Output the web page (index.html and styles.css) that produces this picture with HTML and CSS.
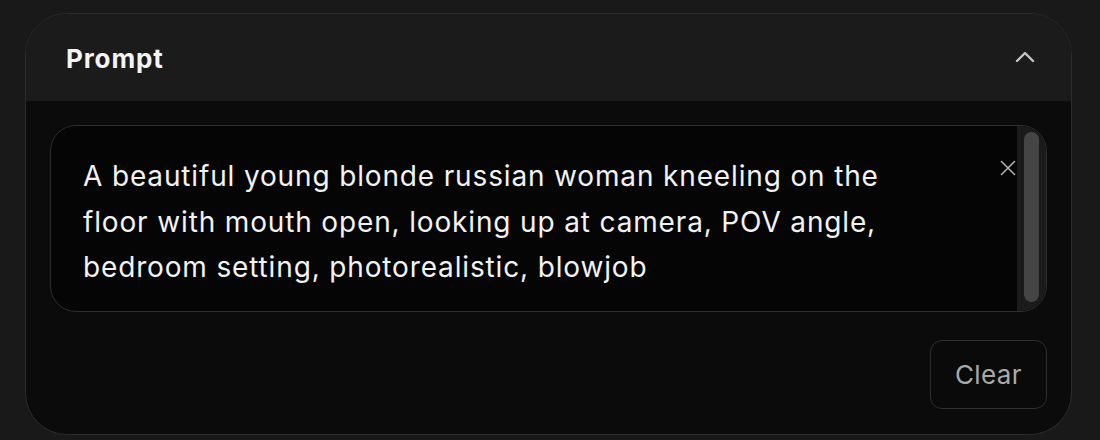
FILE: index.html
```html
<!DOCTYPE html>
<html lang="en">
<head>
<meta charset="UTF-8" />
<title>Prompt</title>
<link rel="stylesheet" href="styles.css">
</head>
<body>
	<section class="panel">
		<header class="panelHead">
			<h2>Prompt</h2>
			<svg class="chevron" width="20" height="12" viewBox="0 0 20 12"><path d="M2 10 L10 2 L18 10" fill="none" stroke="#c4c4c4" stroke-width="2.4" stroke-linecap="round" stroke-linejoin="round"/></svg>
		</header>
		<div class="panelBody">
			<div class="promptBox">
				<div class="promptText">A beautiful young blonde russian woman kneeling on the floor with mouth open, looking up at camera, POV angle, bedroom setting, photorealistic, blowjob</div>
				<svg class="clearX" width="16" height="16" viewBox="0 0 16 16"><path d="M1.5 1.5 L14.5 14.5 M14.5 1.5 L1.5 14.5" stroke="#b0b0b0" stroke-width="1.6" stroke-linecap="round"/></svg>
				<div class="scrollTrack"><div class="scrollThumb"></div></div>
			</div>
			<div class="actions">
				<button class="clearBtn">Clear</button>
			</div>
		</div>
	</section>
</body>
</html>
```
FILE: styles.css
```css
body {
	margin: 0;
	background-color: #191919;
	font-family: Inter, "Liberation Sans", sans-serif;
	padding: 13px 28px 6px 25px;
}

.panel {
	border: 1px solid #2c2c2c;
	border-radius: 42px;
	background-color: #0b0b0b;
	overflow: hidden;
	height: 422px;
	box-sizing: border-box;
}

.panelHead {
	background-color: #1b1b1b;
	height: 87px;
	display: flex;
	align-items: center;
	justify-content: space-between;
	padding: 0 36px 0 40px;
}

.panelHead h2 {
	margin: 0;
	color: #f4f4f4;
	font-size: 26px;
	font-weight: 700;
	letter-spacing: 0.9px;
	margin-top: 2px;
}

.chevron {
	margin-top: -2px;
}

.panelBody {
	padding: 24px 24px 0 24px;
}

.promptBox {
	position: relative;
	border: 1px solid #2e2e2e;
	border-radius: 26px;
	background-color: #050505;
	height: 187px;
	box-sizing: border-box;
	overflow: hidden;
}

.promptText {
	color: #f2f2f2;
	font-size: 28px;
	letter-spacing: 0.85px;
	line-height: 45.5px;
	padding: 28px 120px 0 32px;
}

.clearX {
	position: absolute;
	top: 34px;
	right: 30px;
}

.scrollTrack {
	position: absolute;
	top: 0;
	bottom: 0;
	right: 0;
	width: 29px;
	background-color: #1b1b1b;
	display: flex;
	justify-content: center;
	padding: 6px 0 9px 0;
	box-sizing: border-box;
}

.scrollThumb {
	width: 15px;
	border-radius: 8px;
	background-color: #454545;
}

.actions {
	display: flex;
	justify-content: flex-end;
	padding-top: 28px;
}

.clearBtn {
	width: 117px;
	height: 69px;
	border: 1px solid #2e2e2e;
	border-radius: 12px;
	background-color: #0a0a0a;
	color: #a9a9a9;
	font-family: Inter, "Liberation Sans", sans-serif;
	font-size: 26px;
	letter-spacing: 0.4px;
}
```
